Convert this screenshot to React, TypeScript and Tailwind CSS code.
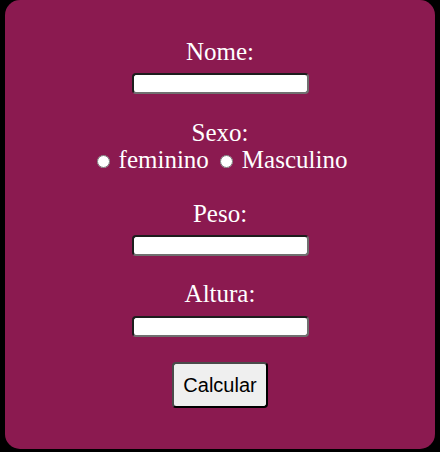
import React from "react";

const Campo = ({ label, top, gap }: { label: string; top: string; gap: string }) => (
  <>
    <label className={`block ${top}`}>{label}</label>
    <input
      type="text"
      className={`block ${gap} w-[177px] h-[21px] bg-white rounded-[4px] border-2 border-t-[#1d1d1d] border-l-[#1d1d1d] border-r-[#707070] border-b-[#707070] outline-none`}
    />
  </>
);

export default function App() {
  return (
    <div className="w-[440px] h-[452px] bg-black">
      <div className="mx-[5px] w-[430px] h-[449px] rounded-[15px] bg-[#8b1a50] pt-[38px] flex flex-col items-center text-white text-[25px] leading-[27.6px] font-['Liberation_Serif',serif]">
        {/* Nome */}
        <Campo label="Nome:" top="" gap="mt-[7px]" />

        {/* Sexo */}
        <label className="block mt-[25px]">Sexo:</label>
        <div className="flex items-center">
          <input type="radio" name="sexo" className="w-[13px] h-[13px] mt-[3px] ml-[4px]" />
          <span className="ml-[9px]">feminino</span>
          <input type="radio" name="sexo" className="w-[13px] h-[13px] ml-[11px] mt-[3px]" />
          <span className="ml-[9px]">Masculino</span>
        </div>

        {/* Peso */}
        <Campo label="Peso:" top="mt-[26px]" gap="mt-[8px]" />

        {/* Altura */}
        <Campo label="Altura:" top="mt-[24px]" gap="mt-[8px]" />

        <button className="mt-[25px] w-[96px] h-[46px] bg-[#efefef] rounded-[4px] border-2 border-t-[#4a4a4a] border-l-[#4a4a4a] border-r-black border-b-black text-black text-[20px] leading-none font-['Liberation_Sans',Arial,sans-serif]">
          Calcular
        </button>
      </div>
    </div>
  );
}
